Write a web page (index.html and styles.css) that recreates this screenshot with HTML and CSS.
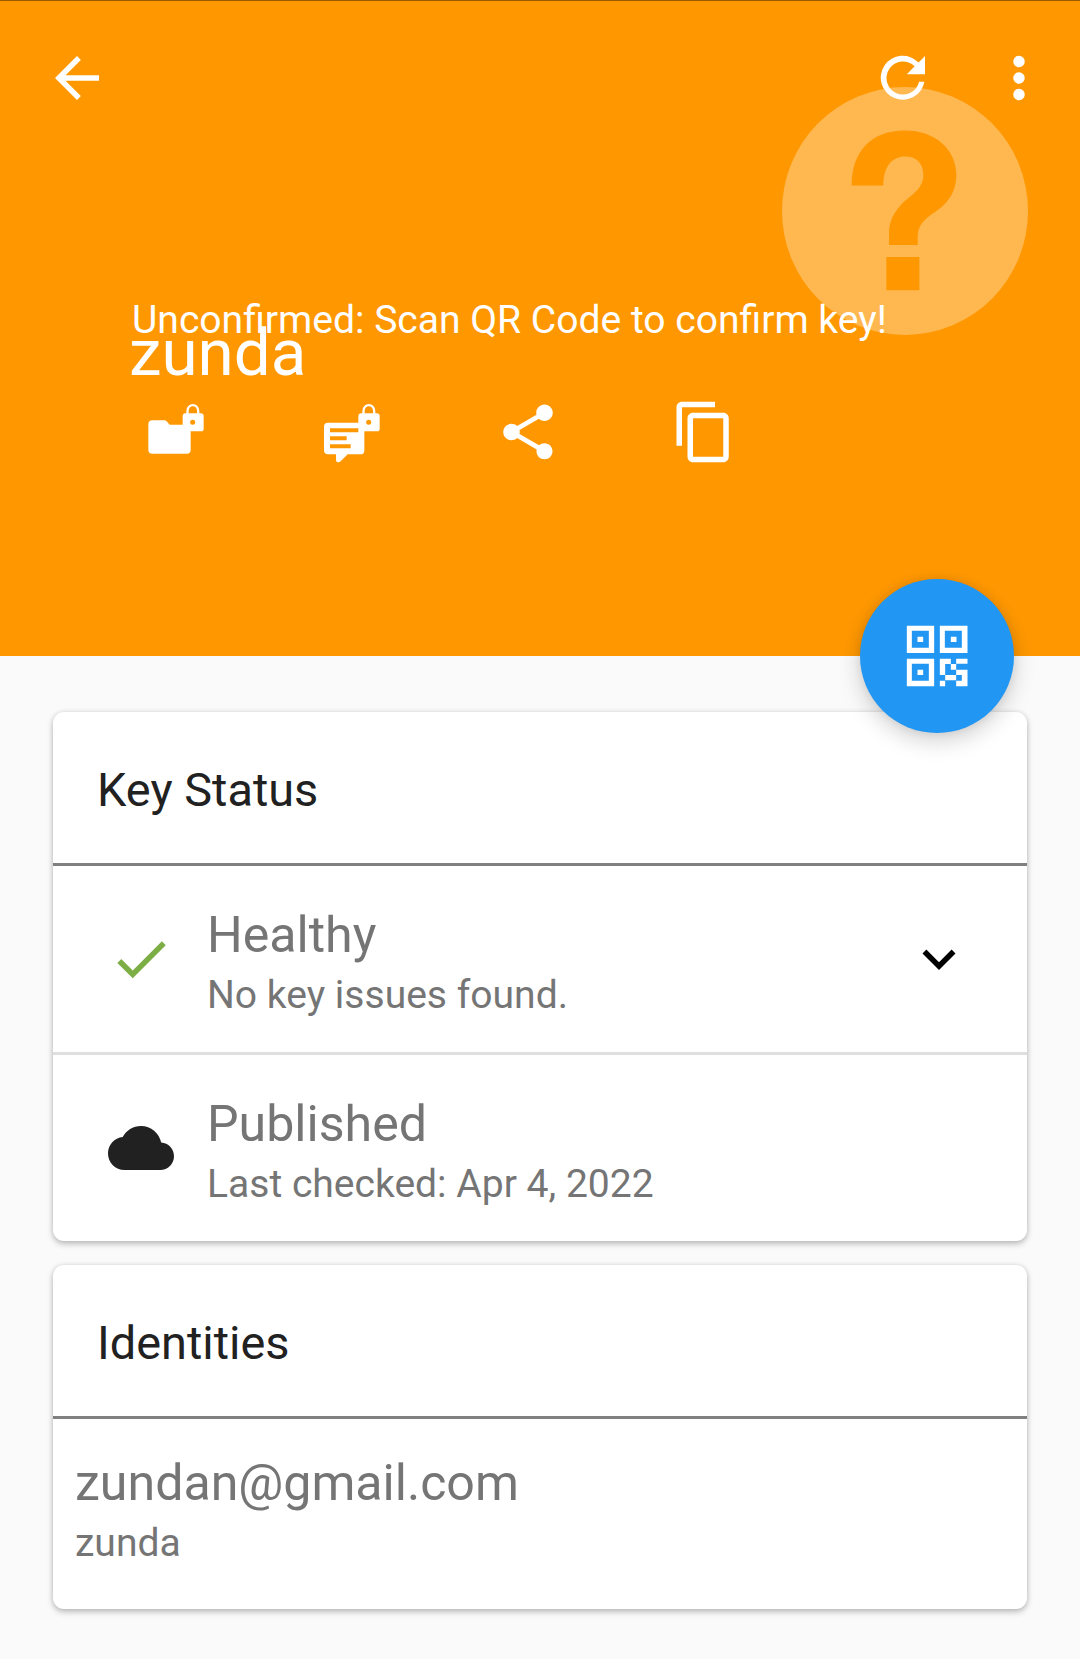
FILE: index.html
```html
<!DOCTYPE html>
<html lang="en">
<head>
<meta charset="utf-8">
<title>Key details</title>
<link rel="stylesheet" href="styles.css">
</head>
<body>
<header class="header">
  <svg class="status-mark" viewBox="66 261 738 743" preserveAspectRatio="none" aria-hidden="true">
    <path fill="#ffb74f" fill-rule="evenodd" d="M66 632.500A369 371.500 0 0 1 804 632.500A369 371.500 0 0 1 66 632.500zM275 556C275 452 335 391 435 391C525 391 589 448 589 524C589 579 560 613 522 638C494 656 473 676 473 710V734H387V700C387 655 412 619 446 593C475 571 490 552 490 525C490 490 470 469 436 469C395 469 370 500 370 556zM379 770H478V870H379z"/>
  </svg>
  <nav class="toolbar">
    <svg class="icon" viewBox="0 0 24 24"><path d="M20 11H7.830l5.590-5.590L12 4l-8 8 8 8 1.410-1.410L7.830 13H20z"/></svg>
    <div class="toolbar-actions">
      <svg class="icon" viewBox="0 0 24 24"><path d="M19.780 13.350A8 8 0 1 1 17.660 6.340L20 4v6.670h-6.600L16.240 7.760A6 6 0 1 0 17.850 13.350z"/></svg>
      <svg class="icon" viewBox="0 0 24 24"><circle cx="12" cy="6" r="2.080"/><circle cx="12" cy="12" r="2.080"/><circle cx="12" cy="18" r="2.080"/></svg>
    </div>
  </nav>
  <p class="status">Unconfirmed: Scan QR Code to confirm key!</p>
  <h1 class="name">zunda</h1>
  <div class="actions">
    <svg class="icon" viewBox="69 327 198 198">
      <path d="M97 391H133Q137 391 140 394L149 404H188V379Q188 370 196 370H199V362A19.500 20 0 0 1 238 362V370H242Q251 370 251 379V416Q251 424 242 424H212V480Q212 491 200 491H97Q85 491 85 479V403Q85 391 97 391z"/>
      <path class="cutout" d="M206 370V362A12.500 13 0 0 1 231 362V370z"/><circle class="cutout" cx="218" cy="397" r="7.500"/>
    </svg>
    <svg class="icon" viewBox="597 327 198 198">
      <path d="M624 398H715V379Q715 370 724 370H727V362A19.500 20 0 0 1 766 362V370H770Q779 370 779 379V416Q779 424 770 424H733V482Q733 493 721 493H683L662 514Q656 519 650 515Q648 513 648 509V493H624Q612 493 612 481V410Q612 398 624 398z"/>
      <path class="cutout" d="M734 370V362A12.500 13 0 0 1 759 362V370zM630 415H715V427H630zM630 439H680V451H630zM630 463H692V475H630z"/><circle class="cutout" cx="746" cy="397" r="7.500"/>
    </svg>
    <svg class="icon" viewBox="0 0 24 24"><path d="M18 16.080c-.76 0-1.440.3-1.960.77L8.910 12.700c.05-.23.09-.46.09-.7s-.04-.47-.09-.7l7.050-4.110c.54.5 1.250.81 2.040.81 1.660 0 3-1.340 3-3s-1.340-3-3-3-3 1.340-3 3c0 .24.04.47.09.7L8.040 9.810C7.500 9.310 6.790 9 6 9c-1.660 0-3 1.340-3 3s1.340 3 3 3c.79 0 1.500-.31 2.040-.81l7.120 4.160c-.05.21-.08.43-.08.65 0 1.610 1.310 2.920 2.920 2.920s2.920-1.310 2.920-2.920-1.310-2.920-2.920-2.920z"/></svg>
    <svg class="icon" viewBox="0 0 24 24"><path d="M16 1H4c-1.100 0-2 .9-2 2v14h2V3h12V1zm3 4H8c-1.100 0-2 .9-2 2v14c0 1.100.9 2 2 2h11c1.100 0 2-.9 2-2V7c0-1.100-.9-2-2-2zm0 16H8V7h11v14z"/></svg>
  </div>
  <div class="fab">
    <svg class="icon" viewBox="192.500 190 198 198">
      <path fill-rule="evenodd" d="M201 198h82v82h-82zM216 213v51h51v-51zM233 231h17v16h-17zM300 198h83v82h-83zM315 213v51h51v-51zM333 231h17v16h-17zM201 297h82v83h-82zM216 312v51h51v-51zM233 330h17v16h-17z"/>
      <path d="M300 297h33v16h-17v33h-16zM349 297h34v15h-34zM333 313h16v17h-16zM349 330h34v50h-34v-17h17v-17h-17zM316 346h33v16h-33zM300 363h16v17h-16z"/>
    </svg>
  </div>
</header>
<main class="content">
  <section class="card">
    <h2 class="card-title">Key Status</h2>
    <div class="row">
      <svg class="icon icon-ok" viewBox="0 0 24 24"><path d="M9 16.170L4.830 12l-1.420 1.410L9 19 21 7l-1.410-1.410z"/></svg>
      <div class="row-text">
        <p class="primary">Healthy</p>
        <p class="secondary">No key issues found.</p>
      </div>
      <svg class="icon icon-expand" viewBox="0 0 24 24"><path d="M16.590 8.590L12 13.170 7.410 8.590 6 10l6 6 6-6z"/></svg>
    </div>
    <div class="row">
      <svg class="icon icon-cloud" viewBox="0 0 24 24"><path d="M19.350 10.040C18.670 6.590 15.640 4 12 4 9.110 4 6.600 5.640 5.350 8.040 2.340 8.360 0 10.910 0 14c0 3.310 2.690 6 6 6h13c2.760 0 5-2.240 5-5 0-2.640-2.050-4.780-4.650-4.960z"/></svg>
      <div class="row-text">
        <p class="primary">Published</p>
        <p class="secondary">Last checked: Apr 4, 2022</p>
      </div>
    </div>
  </section>
  <section class="card">
    <h2 class="card-title">Identities</h2>
    <div class="identity">
      <p class="primary">zundan@gmail.com</p>
      <p class="secondary">zunda</p>
    </div>
  </section>
</main>
</body>
</html>
```
FILE: styles.css
```css
* { box-sizing: border-box; margin: 0; padding: 0; }

body {
  min-height: 1659px;
  background: #fafafa;
  font-family: Roboto, "Liberation Sans", sans-serif;
  font-weight: 400;
}

h1, h2 { font-weight: 400; }
p, h1, h2 { white-space: nowrap; }

.icon { display: block; flex: none; width: 66px; height: 66px; fill: #fff; }
.cutout { fill: #ff9800; }

.header {
  position: relative;
  height: 656px;
  border-top: 1px solid #995b00;
  background: #ff9800;
  color: #fff;
}

.status-mark {
  position: absolute;
  top: 86px;
  right: 52px;
  width: 246px;
  height: 248px;
}

.toolbar {
  position: relative;
  display: flex;
  justify-content: space-between;
  padding: 44px 28px 0 44px;
}
.toolbar-actions { display: flex; gap: 50px; }

.status {
  position: relative;
  margin: 187px 0 0 132px;
  font-size: 39.050px;
  line-height: 45px;
}
.name {
  position: relative;
  margin: -29px 0 0 129px;
  font-size: 65.500px;
  line-height: 78px;
}

.actions {
  display: flex;
  gap: 110px;
  padding: 7px 0 0 143px;
}

.fab {
  position: absolute;
  right: 66px;
  bottom: -77px;
  display: flex;
  align-items: center;
  justify-content: center;
  width: 154px;
  height: 154px;
  border-radius: 50%;
  background: #2196f3;
  box-shadow: 0 8px 22px rgba(0, 0, 0, .18), 0 0 8px rgba(0, 0, 0, .08);
}

.content {
  display: flex;
  flex-direction: column;
  gap: 24px;
  padding: 56px 53px 0;
}

.card {
  border-radius: 11px;
  background: #fff;
  box-shadow: 0 3px 6px rgba(0, 0, 0, .23), 0 0 5px rgba(0, 0, 0, .1);
}

.card-title {
  height: 154px;
  padding: 5px 44px 0;
  border-bottom: 3px solid #808080;
  color: #212121;
  font-size: 46.900px;
  line-height: 146px;
}

.row {
  display: flex;
  align-items: center;
  height: 186px;
  padding: 0 55px;
}
.row + .row { height: 189px; border-top: 3px solid #dfdfdf; }
.row-text {
  flex: 1;
  align-self: flex-start;
  padding: 40px 0 0 33px;
}

.primary { color: #757575; font-size: 50.100px; line-height: 58px; }
.secondary { margin-top: 9px; color: #757575; font-size: 39.050px; line-height: 45px; }

.icon-ok { fill: #7cae45; }
.icon-cloud { fill: #212121; }
.icon-expand { fill: #000; }

.identity { height: 190px; padding: 35px 22px 0; }
```
